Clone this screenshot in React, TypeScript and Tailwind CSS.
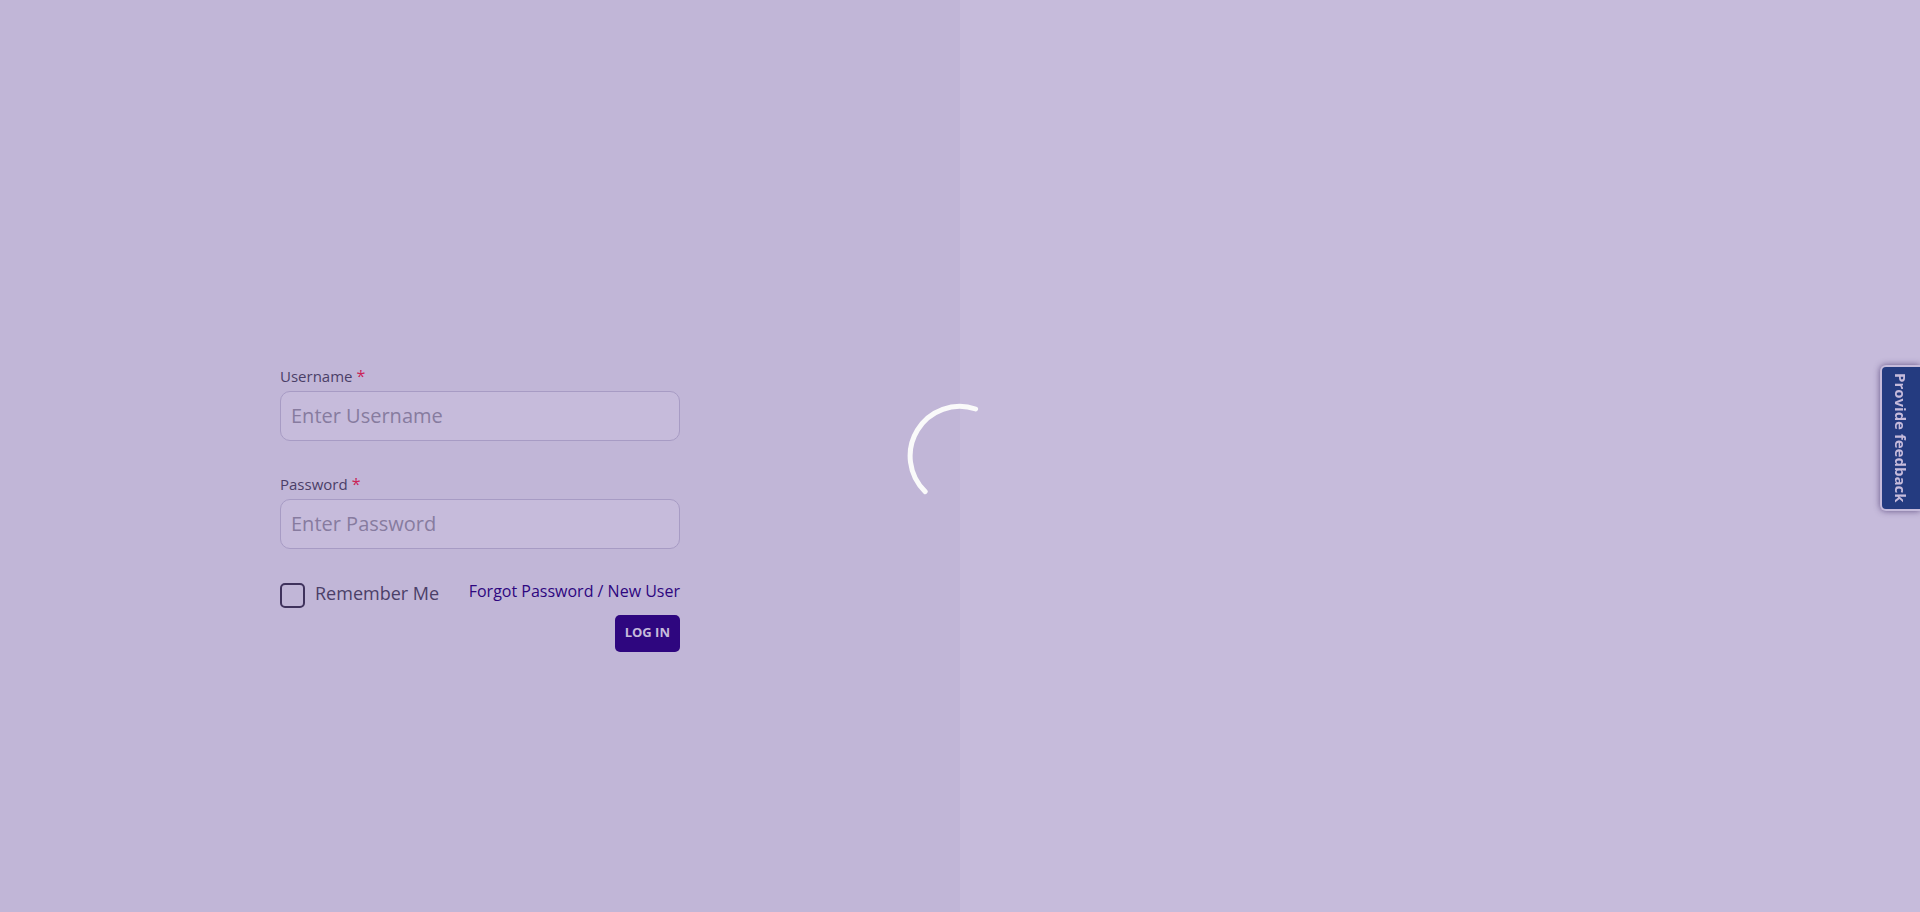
import { useState, type InputHTMLAttributes } from "react";

type FieldProps = InputHTMLAttributes<HTMLInputElement> & { id: string; label: string };

function Field({ id, label, ...input }: FieldProps) {
  return (
    <div className="flex flex-col gap-1">
      <label htmlFor={id} className="flex gap-1 text-[15px] leading-[22px] text-[#4b3f68]">
        {label}
        <span className="text-base leading-[22px] text-[#cb2357]">*</span>
      </label>
      <input
        id={id}
        className="h-[50px] w-full rounded-[10px] border border-[#a79bc4] bg-[#c6bbdb] px-2.5 pb-0.5 text-xl text-[#4b3f68] outline-none placeholder:text-[#877b9f]"
        {...input}
      />
    </div>
  );
}

function Spinner() {
  return (
    <div role="status" aria-label="Loading" className="pointer-events-none fixed inset-0 flex items-center justify-center">
      <svg width="106" height="106" viewBox="-53 -53 106 106" fill="none">
        <path d="M15.6 -47A49.6 49.6 0 0 0 -34.8 35.6" stroke="#fafafa" strokeWidth="5" strokeLinecap="round" />
      </svg>
    </div>
  );
}

export default function App() {
  const [remember, setRemember] = useState(false);

  return (
    <div className="flex min-h-screen bg-[#c6bbdb] font-['Open_Sans',sans-serif]">
      <main className="flex w-1/2 flex-col items-center justify-center bg-[#c1b6d7] pt-[105px]">
        <form className="flex w-[400px] flex-col gap-8" onSubmit={(e) => e.preventDefault()}>
          <Field id="username" label="Username" placeholder="Enter Username" autoComplete="username" />
          <Field id="password" label="Password" type="password" placeholder="Enter Password" autoComplete="current-password" />
          <div className="flex items-start justify-between">
            <label className="flex items-start gap-2.5 text-lg leading-6 text-[#4b3f68]">
              <input
                type="checkbox"
                checked={remember}
                onChange={(e) => setRemember(e.target.checked)}
                className="mt-0.5 size-[25px] appearance-none rounded-[5px] border-2 border-[#3f325c] checked:bg-[#2e067f]"
              />
              Remember Me
            </label>
            <div className="flex flex-col items-end gap-3.5">
              <a href="#account" className="text-base leading-5 text-[#2e067f]">
                Forgot Password / New User
              </a>
              <button type="submit" className="h-[37px] rounded-[5px] bg-[#2e067f] px-2.5 pb-0.5 text-[13px] font-bold text-[#c6bbdb]">
                LOG IN
              </button>
            </div>
          </div>
        </form>
      </main>
      <button
        type="button"
        className="fixed top-[365px] right-0 flex h-[146px] w-10 items-center justify-center rounded-l-md border-2 border-r-0 border-[#c6bbdb] bg-[#243b80] text-[15px] font-bold text-[#c6bbdb] shadow-[0_0_6px_rgba(60,40,100,0.7)] [writing-mode:vertical-rl]"
      >
        Provide feedback
      </button>
      <Spinner />
    </div>
  );
}
